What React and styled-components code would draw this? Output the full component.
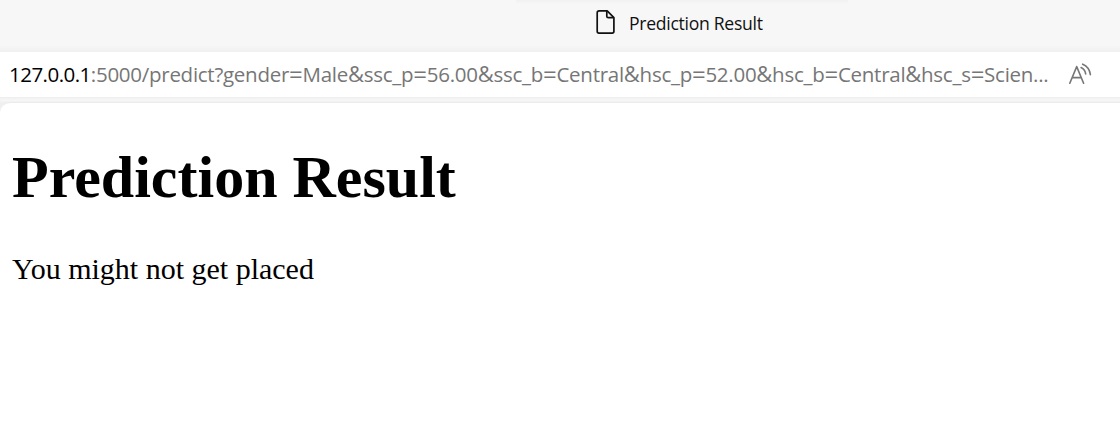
import React from "react";
import styled, { createGlobalStyle } from "styled-components";

const GlobalStyle = createGlobalStyle`
  *, *::before, *::after { box-sizing: border-box; }
  body { margin: 0; background: #f7f7f7; }
`;

const Window = styled.div`
  display: flex;
  flex-direction: column;
  width: 1120px;
  height: 427px;
  overflow: hidden;
  background: #f7f7f7;
`;

const TabStrip = styled.header`
  display: flex;
  align-items: center;
  flex: none;
  height: 52px;
  padding: 0 0 8px 595px;
  background:
    linear-gradient(to bottom, #f1f1f1, rgba(247, 247, 247, 0)) 516px 0 / 332px 4px no-repeat,
    linear-gradient(to bottom, #f7f7f7 45px, #f0f0f0 52px);
`;

const TabTitle = styled.span`
  margin: 2px 0 0 13px;
  font: 400 17.6px/24px "Open Sans", sans-serif;
  letter-spacing: -0.29px;
  color: #111;
  white-space: nowrap;
`;

const AddressBar = styled.div`
  display: flex;
  align-items: center;
  flex: none;
  height: 45px;
  padding-left: 9px;
  background: #fff;
`;

const Url = styled.div`
  width: 1059px;
  height: 32px;
  font: 400 20.5px/30px "Open Sans", sans-serif;
  letter-spacing: -0.268px;
  color: #767676;
  white-space: nowrap;
`;

const Host = styled.span`
  color: #000;
  letter-spacing: -0.52px;
`;

const Sign = styled.span`
  font-size: ${(p) => (p.$wide ? "24px" : "22px")};
  line-height: 0;
  vertical-align: ${(p) => (p.$wide ? "-1px" : "0")};
`;

const Viewport = styled.div`
  flex: 1;
  display: flex;
  padding-top: 5px;
  background: linear-gradient(to bottom, #ededed 0, #f7f7f7 3px, #efefef 6px, #efefef 100%);
`;

const Page = styled.main`
  flex: 1;
  padding: 40px 12px;
  border-top: 1px solid #ebebeb;
  border-top-left-radius: 10px;
  background: #fff;
  color: #000;
  font-family: "Liberation Serif", serif;
`;

const Heading = styled.h1`
  margin: 0;
  font-size: 60px;
  line-height: 69px;
  font-weight: 700;
`;

const Message = styled.p`
  margin: 40px 0 0;
  font-size: 30px;
  line-height: 34px;
`;

const DocumentIcon = () => (
  <svg width="21" height="26" viewBox="0 0 21 26" fill="none" stroke="#111" strokeWidth="1.7" strokeLinejoin="round">
    <path d="M4.2 1.9H12.2L18.9 8.6V22.3Q18.9 24.1 17.1 24.1H4Q2.2 24.1 2.2 22.3V3.7Q2.2 1.9 4.2 1.9Z" />
    <path d="M11.8 2V7.2Q11.8 8.7 13.3 8.7H18.7" />
  </svg>
);

const ReadAloudIcon = () => (
  <svg width="26" height="24" viewBox="0 0 26 24" fill="none" stroke="#767676" strokeWidth="1.6" strokeLinecap="round" strokeLinejoin="round">
    <path d="M1.8 20.2L8.7 3.6L15.6 20.2M4.2 14.6H13.2" />
    <path d="M13.1 4.6Q17 6.4 17.7 10.9M14.7 1.2Q21.4 4 22.4 11.6" />
  </svg>
);

const params = [
  ["gender", "Male"],
  ["ssc_p", "56.00"],
  ["ssc_b", "Central"],
  ["hsc_p", "52.00"],
  ["hsc_b", "Central"],
  ["hsc_s", "Scien..."],
];

export default function App() {
  return (
    <Window>
      <GlobalStyle />
      <TabStrip>
        <DocumentIcon />
        <TabTitle>Prediction Result</TabTitle>
      </TabStrip>
      <AddressBar>
        <Url>
          <Host>127.0.0.1</Host>:5000/predict?
          {params.map(([name, value], index) => (
            <React.Fragment key={name}>
              {index > 0 && <Sign>&amp;</Sign>}
              {name}
              <Sign $wide>=</Sign>
              {value}
            </React.Fragment>
          ))}
        </Url>
        <ReadAloudIcon />
      </AddressBar>
      <Viewport>
        <Page>
          <Heading>Prediction Result</Heading>
          <Message>You might not get placed</Message>
        </Page>
      </Viewport>
    </Window>
  );
}
